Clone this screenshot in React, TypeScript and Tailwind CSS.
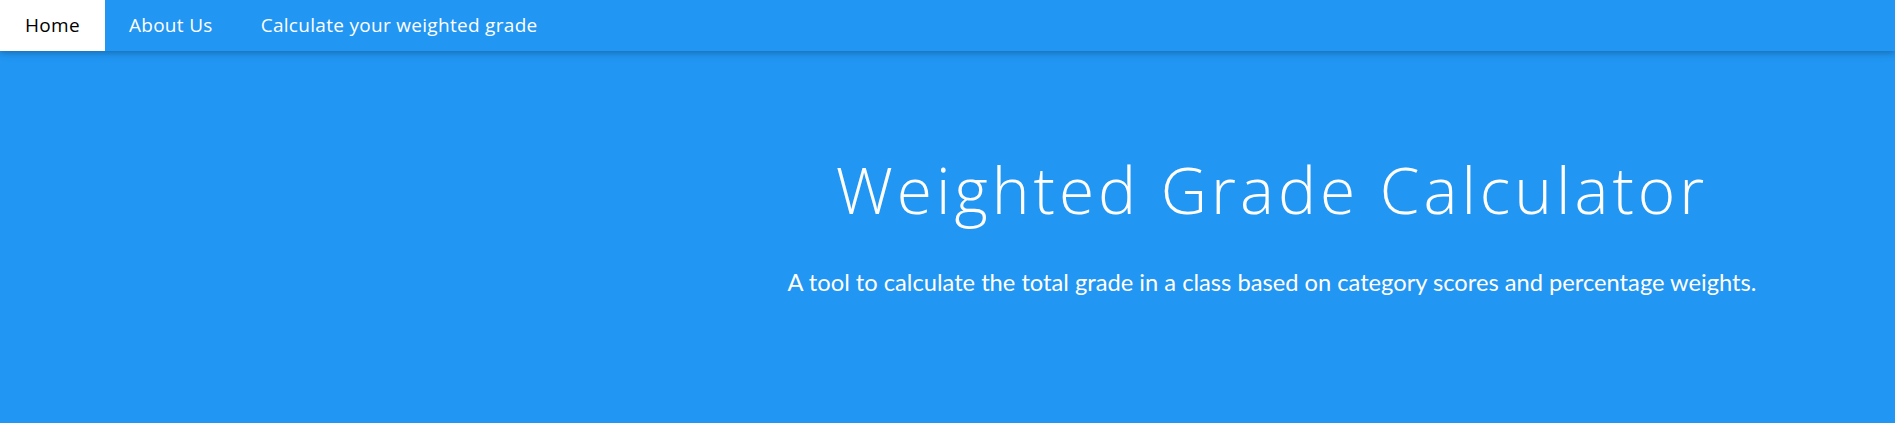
import React from 'react';

const navItems = ['Home', 'About Us', 'Calculate your weighted grade'];

export default function App() {
  return (
    <div className="min-h-[423px] w-full bg-[#2196f3] text-white">
      {/* Top bar */}
      <nav className="relative z-10 flex h-[51px] items-stretch bg-[#2196f3] shadow-[0_2px_5px_0_rgba(0,0,0,0.16),0_2px_10px_0_rgba(0,0,0,0.12)] font-['Open_Sans',sans-serif] text-[19px] tracking-[0.3px]">
        {navItems.map((item, i) => (
          <a
            key={item}
            href="#"
            className={
              i === 0
                ? 'flex items-center bg-white px-[25px] text-black'
                : 'flex items-center px-6 text-white'
            }
          >
            {item}
          </a>
        ))}
      </nav>

      {/* Hero */}
      <header className="flex">
        <div className="w-[649px] shrink-0"></div>
        <div className="flex flex-1 flex-col items-center pt-[101px] pb-[100px] text-center">
          <h1 className="font-['Open_Sans',sans-serif] text-[64px] font-light leading-[1.2] tracking-[4px]">
            Weighted Grade Calculator
          </h1>
          <p className="mt-[36px] font-['Lato',sans-serif] text-[23.7px] leading-[1.5]">
            A tool to calculate the total grade in a class based on category scores and percentage weights.
          </p>
        </div>
      </header>
    </div>
  );
}
